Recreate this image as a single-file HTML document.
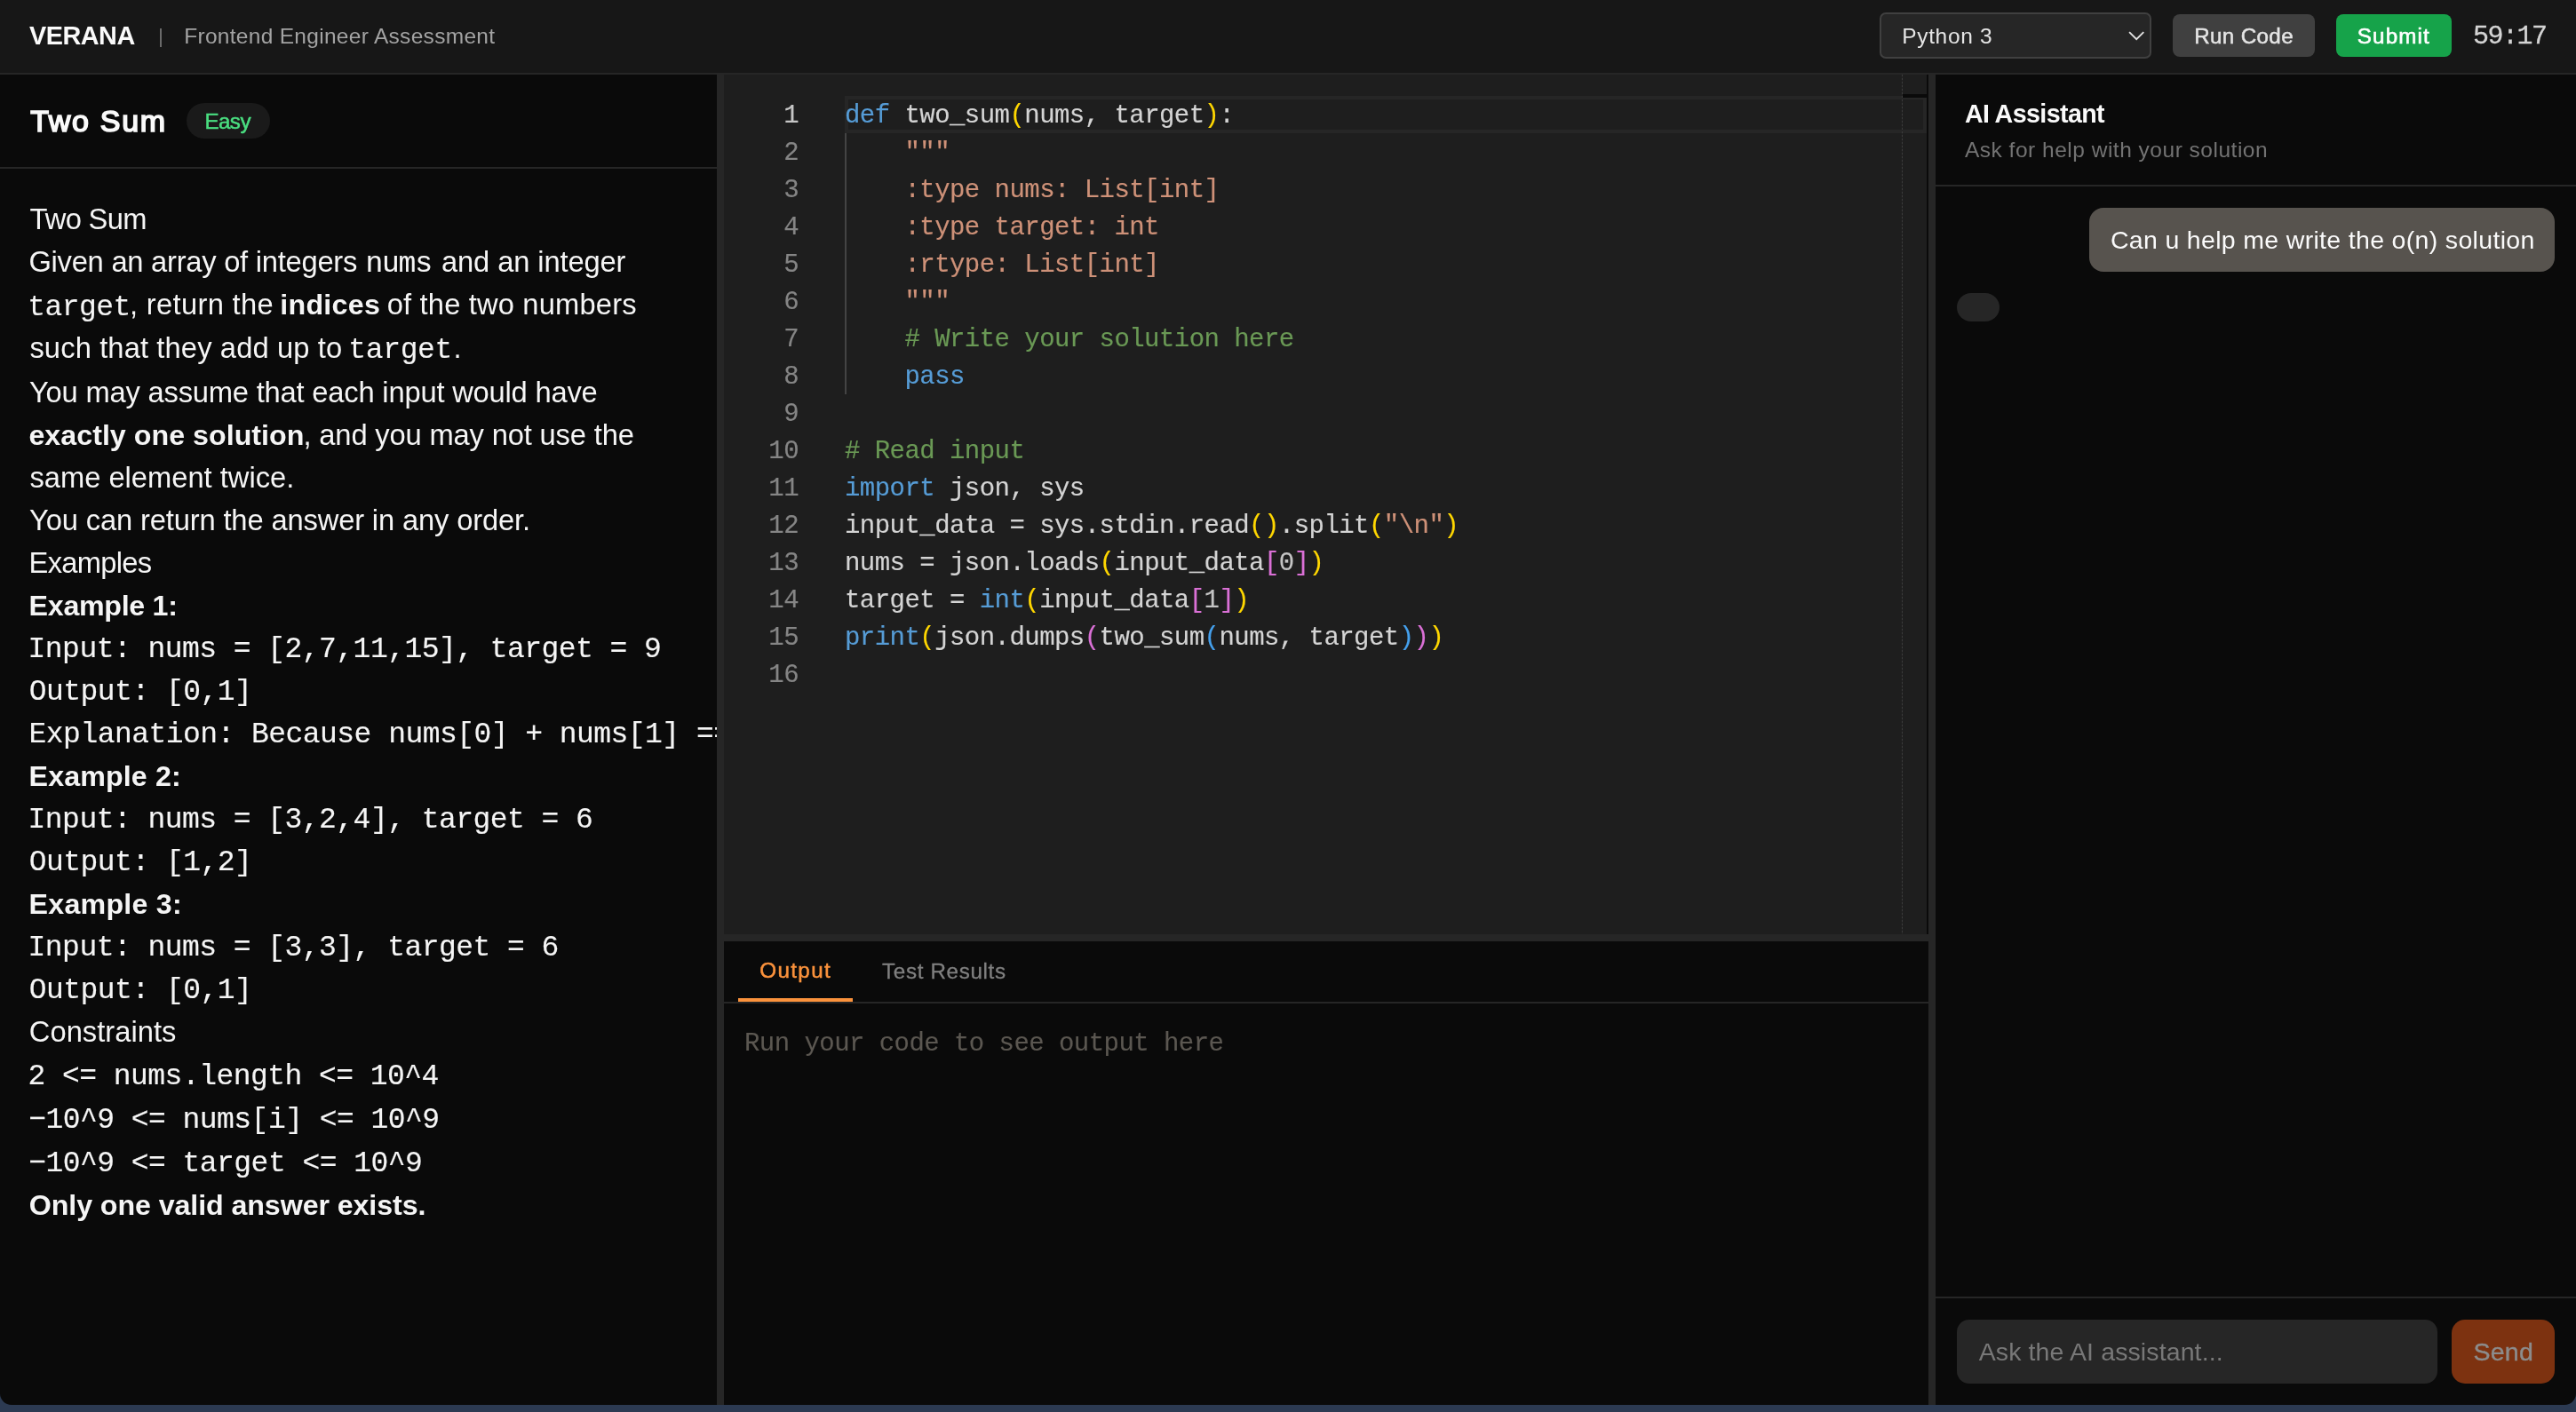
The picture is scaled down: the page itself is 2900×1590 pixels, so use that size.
<!DOCTYPE html>
<html lang="en"><head><meta charset="utf-8"><title>Verana - Frontend Engineer Assessment</title>
<style>
html,body{margin:0;padding:0}
body{width:2900px;height:1590px;background:#2c3a52;overflow:hidden;position:relative;font-family:"Liberation Sans",sans-serif}
#win{position:absolute;left:0;top:0;width:2900px;height:1582px;background:#0a0a0a;border-radius:0 0 13px 13px;overflow:hidden}
.t{position:absolute;white-space:pre;margin:0;padding:0}
.b{position:absolute;box-sizing:border-box}
#txt{position:absolute;left:0;top:0;width:2900px;height:1582px;will-change:transform}
#left{position:absolute;left:0;top:0;width:807px;height:1582px;overflow:hidden}
</style></head><body>
<div id="win">
<!-- header -->
<div class="b" style="left:0;top:0;width:2900px;height:82px;background:#171717"></div>
<div class="b" style="left:0;top:82px;width:2900px;height:2px;background:#262626"></div>
<div class="b" style="left:180px;top:32px;width:2px;height:21px;background:#6a6a6a"></div>
<div class="b" style="left:2116px;top:14px;width:306px;height:52px;background:#262626;border:2px solid #404040;border-radius:7px"></div>
<svg class="b" style="left:2392px;top:30px" width="28" height="22" viewBox="0 0 28 22"><path d="M5.1 6.1 L13.2 14.2 L21.3 6.1" fill="none" stroke="#e2e2e2" stroke-width="1.9" stroke-linecap="butt" stroke-linejoin="miter"/></svg>
<div class="b" style="left:2446px;top:16px;width:160px;height:48px;background:#404040;border-radius:8px"></div>
<div class="b" style="left:2630px;top:16px;width:130px;height:48px;background:#16a34a;border-radius:8px"></div>

<!-- left panel -->
<div class="b" style="left:210px;top:116px;width:94px;height:40px;background:#1a1a1a;border-radius:20px"></div>
<div class="b" style="left:0;top:188px;width:807px;height:2px;background:#262626"></div>

<!-- dividers -->
<div class="b" style="left:807px;top:84px;width:8px;height:1498px;background:#262626"></div>
<div class="b" style="left:2171px;top:84px;width:8px;height:1498px;background:#262626"></div>
<div class="b" style="left:815px;top:1052px;width:1356px;height:8px;background:#262626"></div>

<!-- editor -->
<div class="b" style="left:815px;top:84px;width:1354px;height:968px;background:#1e1e1e"></div>
<div class="b" style="left:951px;top:108px;width:1218px;height:42px;border:4px solid #262626"></div>
<div class="b" style="left:951px;top:150px;width:2px;height:294px;background:#444444"></div>
<div class="b" style="left:2141px;top:84px;width:1px;height:968px;background:repeating-linear-gradient(180deg,#3c3c3c 0,#3c3c3c 2px,#262626 2px,#262626 4px)"></div>
<div class="b" style="left:2142px;top:106px;width:27px;height:4px;background:#0a0a0a"></div>

<!-- output panel -->
<div class="b" style="left:815px;top:1128px;width:1356px;height:2px;background:#262626"></div>
<div class="b" style="left:831px;top:1124px;width:129px;height:4px;background:#fb923c"></div>

<!-- right panel -->
<div class="b" style="left:2179px;top:208px;width:721px;height:2px;background:#262626"></div>
<div class="b" style="left:2352px;top:234px;width:524px;height:72px;background:#57534e;border-radius:16px"></div>
<div class="b" style="left:2203px;top:330px;width:48px;height:32px;background:#262626;border-radius:16px"></div>
<div class="b" style="left:2179px;top:1460px;width:721px;height:2px;background:#262626"></div>
<div class="b" style="left:2203px;top:1486px;width:541px;height:72px;background:#262626;border-radius:14px"></div>
<div class="b" style="left:2760px;top:1486px;width:116px;height:72px;background:#7d3210;border-radius:15px"></div>

</div>
<div id="txt">
<div id="left">
<div class="t" style="left:33.40px;top:228.00px;font:400 32.7px/37px 'Liberation Sans', sans-serif;color:#f5f5f5;letter-spacing:-0.702px;">Two Sum</div>
<div class="t" style="left:32.40px;top:275.80px;font:400 32.7px/37px 'Liberation Sans', sans-serif;color:#f5f5f5;letter-spacing:-0.246px;">Given an array of integers</div>
<div class="t" style="left:411.40px;top:278.80px;font:400 33px/37px 'Liberation Mono', monospace;color:#f5f5f5;letter-spacing:-1.203px;-webkit-text-stroke-width:0.1px;">nums</div>
<div class="t" style="left:497.00px;top:275.80px;font:400 32.7px/37px 'Liberation Sans', sans-serif;color:#f5f5f5;letter-spacing:-0.117px;">and an integer</div>
<div class="t" style="left:31.30px;top:327.60px;font:400 33px/37px 'Liberation Mono', monospace;color:#f5f5f5;letter-spacing:-0.583px;-webkit-text-stroke-width:0.1px;">target</div>
<div class="t" style="left:146.00px;top:324.40px;font:400 32.7px/37px 'Liberation Sans', sans-serif;color:#f5f5f5;letter-spacing:0.328px;">, return the</div>
<div class="t" style="left:315.20px;top:325.40px;font:700 32.2px/36px 'Liberation Sans', sans-serif;color:#f5f5f5;letter-spacing:0.298px;">indices</div>
<div class="t" style="left:435.70px;top:324.40px;font:400 32.7px/37px 'Liberation Sans', sans-serif;color:#f5f5f5;letter-spacing:0.168px;">of the two numbers</div>
<div class="t" style="left:33.40px;top:373.20px;font:400 32.7px/37px 'Liberation Sans', sans-serif;color:#f5f5f5;letter-spacing:0.124px;">such that they add up to</div>
<div class="t" style="left:392.20px;top:376.20px;font:400 33px/37px 'Liberation Mono', monospace;color:#f5f5f5;letter-spacing:-0.323px;-webkit-text-stroke-width:0.1px;">target</div>
<div class="t" style="left:510.50px;top:373.20px;font:400 32.7px/37px 'Liberation Sans', sans-serif;color:#f5f5f5;letter-spacing:0.000px;">.</div>
<div class="t" style="left:33.00px;top:422.50px;font:400 32.7px/37px 'Liberation Sans', sans-serif;color:#f5f5f5;letter-spacing:-0.193px;">You may assume that each input would have</div>
<div class="t" style="left:32.40px;top:471.60px;font:700 32.2px/36px 'Liberation Sans', sans-serif;color:#f5f5f5;letter-spacing:0.033px;">exactly one solution</div>
<div class="t" style="left:341.50px;top:470.60px;font:400 32.7px/37px 'Liberation Sans', sans-serif;color:#f5f5f5;letter-spacing:-0.157px;">, and you may not use the</div>
<div class="t" style="left:33.40px;top:518.60px;font:400 32.7px/37px 'Liberation Sans', sans-serif;color:#f5f5f5;letter-spacing:-0.003px;">same element twice.</div>
<div class="t" style="left:33.00px;top:566.70px;font:400 32.7px/37px 'Liberation Sans', sans-serif;color:#f5f5f5;letter-spacing:-0.139px;">You can return the answer in any order.</div>
<div class="t" style="left:32.60px;top:614.50px;font:400 32.7px/37px 'Liberation Sans', sans-serif;color:#f5f5f5;letter-spacing:-0.711px;">Examples</div>
<div class="t" style="left:32.60px;top:663.50px;font:700 32.2px/36px 'Liberation Sans', sans-serif;color:#f5f5f5;letter-spacing:-0.293px;">Example 1:</div>
<div class="t" style="left:31.60px;top:712.70px;font:400 33px/37px 'Liberation Mono', monospace;color:#f5f5f5;letter-spacing:-0.539px;-webkit-text-stroke-width:0.15px;">Input: nums = [2,7,11,15], target = 9</div>
<div class="t" style="left:32.80px;top:760.70px;font:400 33px/37px 'Liberation Mono', monospace;color:#f5f5f5;letter-spacing:-0.539px;-webkit-text-stroke-width:0.15px;">Output: [0,1]</div>
<div class="t" style="left:32.60px;top:808.70px;font:400 33px/37px 'Liberation Mono', monospace;color:#f5f5f5;letter-spacing:-0.539px;-webkit-text-stroke-width:0.15px;">Explanation: Because nums[0] + nums[1] == 9, we return [0, 1].</div>
<div class="t" style="left:32.60px;top:855.60px;font:700 32.2px/36px 'Liberation Sans', sans-serif;color:#f5f5f5;letter-spacing:0.129px;">Example 2:</div>
<div class="t" style="left:31.60px;top:904.70px;font:400 33px/37px 'Liberation Mono', monospace;color:#f5f5f5;letter-spacing:-0.539px;-webkit-text-stroke-width:0.15px;">Input: nums = [3,2,4], target = 6</div>
<div class="t" style="left:32.80px;top:952.70px;font:400 33px/37px 'Liberation Mono', monospace;color:#f5f5f5;letter-spacing:-0.539px;-webkit-text-stroke-width:0.15px;">Output: [1,2]</div>
<div class="t" style="left:32.60px;top:999.50px;font:700 32.2px/36px 'Liberation Sans', sans-serif;color:#f5f5f5;letter-spacing:0.229px;">Example 3:</div>
<div class="t" style="left:31.60px;top:1048.70px;font:400 33px/37px 'Liberation Mono', monospace;color:#f5f5f5;letter-spacing:-0.539px;-webkit-text-stroke-width:0.15px;">Input: nums = [3,3], target = 6</div>
<div class="t" style="left:32.80px;top:1096.50px;font:400 33px/37px 'Liberation Mono', monospace;color:#f5f5f5;letter-spacing:-0.539px;-webkit-text-stroke-width:0.15px;">Output: [0,1]</div>
<div class="t" style="left:32.80px;top:1142.70px;font:400 32.7px/37px 'Liberation Sans', sans-serif;color:#f5f5f5;letter-spacing:0.022px;">Constraints</div>
<div class="t" style="left:31.50px;top:1193.80px;font:400 33px/37px 'Liberation Mono', monospace;color:#f5f5f5;letter-spacing:-0.539px;-webkit-text-stroke-width:0.15px;">2 &lt;= nums.length &lt;= 10^4</div>
<div class="t" style="left:32.20px;top:1242.90px;font:400 33px/37px 'Liberation Mono', monospace;color:#f5f5f5;letter-spacing:-0.539px;-webkit-text-stroke-width:0.15px;">−10^9 &lt;= nums[i] &lt;= 10^9</div>
<div class="t" style="left:32.20px;top:1291.80px;font:400 33px/37px 'Liberation Mono', monospace;color:#f5f5f5;letter-spacing:-0.539px;-webkit-text-stroke-width:0.15px;">−10^9 &lt;= target &lt;= 10^9</div>
<div class="t" style="left:32.80px;top:1338.70px;font:700 32.2px/36px 'Liberation Sans', sans-serif;color:#f5f5f5;letter-spacing:-0.085px;">Only one valid answer exists.</div>
</div>
<div class="t" style="left:33.00px;top:23.90px;font:700 28.8px/32px 'Liberation Sans', sans-serif;color:#fafafa;letter-spacing:-0.481px;">VERANA</div>
<div class="t" style="left:207.20px;top:27.20px;font:400 24.5px/27px 'Liberation Sans', sans-serif;color:#a3a3a3;letter-spacing:0.297px;">Frontend Engineer Assessment</div>
<div class="t" style="left:2141.20px;top:27.40px;font:400 24.5px/27px 'Liberation Sans', sans-serif;color:#e5e5e5;letter-spacing:0.674px;">Python 3</div>
<div class="t" style="left:2470.20px;top:26.90px;font:400 24.2px/27px 'Liberation Sans', sans-serif;color:#e5e5e5;letter-spacing:0.362px;-webkit-text-stroke:0.5px #e5e5e5;">Run Code</div>
<div class="t" style="left:2653.80px;top:26.90px;font:400 24.2px/27px 'Liberation Sans', sans-serif;color:#ffffff;letter-spacing:1.128px;-webkit-text-stroke:0.6px #fff;">Submit</div>
<div class="t" style="left:2784.00px;top:23.80px;font:400 30px/34px 'Liberation Mono', monospace;color:#d4d4d4;letter-spacing:-1.503px;-webkit-text-stroke-width:0.3px;">59:17</div>
<div class="t" style="left:34.20px;top:116.90px;font:400 34px/38px 'Liberation Sans', sans-serif;color:#fafafa;letter-spacing:1.702px;-webkit-text-stroke:1.7px #fafafa;">Two Sum</div>
<div class="t" style="left:230.40px;top:122.90px;font:400 24.2px/27px 'Liberation Sans', sans-serif;color:#4ade80;letter-spacing:-0.560px;-webkit-text-stroke:0.5px #4ade80;">Easy</div>
<div class="t" style="left:882.14px;top:114.00px;font:400 29px/33px 'Liberation Mono', monospace;color:#c6c6c6;letter-spacing:-0.547px;-webkit-text-stroke-width:0.15px;">1</div>
<div class="t" style="left:951.00px;top:114.00px;font:400 29px/33px 'Liberation Mono', monospace;color:#d4d4d4;letter-spacing:-0.547px;-webkit-text-stroke-width:0.15px;"><span style="color:#569cd6">def</span><span style="color:#d4d4d4"> two_sum</span><span style="color:#ffd700">(</span><span style="color:#d4d4d4">nums, target</span><span style="color:#ffd700">)</span><span style="color:#d4d4d4">:</span></div>
<div class="t" style="left:882.14px;top:156.00px;font:400 29px/33px 'Liberation Mono', monospace;color:#858585;letter-spacing:-0.547px;-webkit-text-stroke-width:0.15px;">2</div>
<div class="t" style="left:951.00px;top:156.00px;font:400 29px/33px 'Liberation Mono', monospace;color:#d4d4d4;letter-spacing:-0.547px;-webkit-text-stroke-width:0.15px;"><span style="color:#ce9178">    &quot;&quot;&quot;</span></div>
<div class="t" style="left:882.14px;top:198.00px;font:400 29px/33px 'Liberation Mono', monospace;color:#858585;letter-spacing:-0.547px;-webkit-text-stroke-width:0.15px;">3</div>
<div class="t" style="left:951.00px;top:198.00px;font:400 29px/33px 'Liberation Mono', monospace;color:#d4d4d4;letter-spacing:-0.547px;-webkit-text-stroke-width:0.15px;"><span style="color:#ce9178">    :type nums: List[int]</span></div>
<div class="t" style="left:882.14px;top:240.00px;font:400 29px/33px 'Liberation Mono', monospace;color:#858585;letter-spacing:-0.547px;-webkit-text-stroke-width:0.15px;">4</div>
<div class="t" style="left:951.00px;top:240.00px;font:400 29px/33px 'Liberation Mono', monospace;color:#d4d4d4;letter-spacing:-0.547px;-webkit-text-stroke-width:0.15px;"><span style="color:#ce9178">    :type target: int</span></div>
<div class="t" style="left:882.14px;top:282.00px;font:400 29px/33px 'Liberation Mono', monospace;color:#858585;letter-spacing:-0.547px;-webkit-text-stroke-width:0.15px;">5</div>
<div class="t" style="left:951.00px;top:282.00px;font:400 29px/33px 'Liberation Mono', monospace;color:#d4d4d4;letter-spacing:-0.547px;-webkit-text-stroke-width:0.15px;"><span style="color:#ce9178">    :rtype: List[int]</span></div>
<div class="t" style="left:882.14px;top:324.00px;font:400 29px/33px 'Liberation Mono', monospace;color:#858585;letter-spacing:-0.547px;-webkit-text-stroke-width:0.15px;">6</div>
<div class="t" style="left:951.00px;top:324.00px;font:400 29px/33px 'Liberation Mono', monospace;color:#d4d4d4;letter-spacing:-0.547px;-webkit-text-stroke-width:0.15px;"><span style="color:#ce9178">    &quot;&quot;&quot;</span></div>
<div class="t" style="left:882.14px;top:366.00px;font:400 29px/33px 'Liberation Mono', monospace;color:#858585;letter-spacing:-0.547px;-webkit-text-stroke-width:0.15px;">7</div>
<div class="t" style="left:951.00px;top:366.00px;font:400 29px/33px 'Liberation Mono', monospace;color:#d4d4d4;letter-spacing:-0.547px;-webkit-text-stroke-width:0.15px;"><span style="color:#6a9955">    # Write your solution here</span></div>
<div class="t" style="left:882.14px;top:408.00px;font:400 29px/33px 'Liberation Mono', monospace;color:#858585;letter-spacing:-0.547px;-webkit-text-stroke-width:0.15px;">8</div>
<div class="t" style="left:951.00px;top:408.00px;font:400 29px/33px 'Liberation Mono', monospace;color:#d4d4d4;letter-spacing:-0.547px;-webkit-text-stroke-width:0.15px;"><span style="color:#569cd6">    pass</span></div>
<div class="t" style="left:882.14px;top:450.00px;font:400 29px/33px 'Liberation Mono', monospace;color:#858585;letter-spacing:-0.547px;-webkit-text-stroke-width:0.15px;">9</div>
<div class="t" style="left:865.29px;top:492.00px;font:400 29px/33px 'Liberation Mono', monospace;color:#858585;letter-spacing:-0.547px;-webkit-text-stroke-width:0.15px;">10</div>
<div class="t" style="left:951.00px;top:492.00px;font:400 29px/33px 'Liberation Mono', monospace;color:#d4d4d4;letter-spacing:-0.547px;-webkit-text-stroke-width:0.15px;"><span style="color:#6a9955"># Read input</span></div>
<div class="t" style="left:865.29px;top:534.00px;font:400 29px/33px 'Liberation Mono', monospace;color:#858585;letter-spacing:-0.547px;-webkit-text-stroke-width:0.15px;">11</div>
<div class="t" style="left:951.00px;top:534.00px;font:400 29px/33px 'Liberation Mono', monospace;color:#d4d4d4;letter-spacing:-0.547px;-webkit-text-stroke-width:0.15px;"><span style="color:#569cd6">import</span><span style="color:#d4d4d4"> json, sys</span></div>
<div class="t" style="left:865.29px;top:576.00px;font:400 29px/33px 'Liberation Mono', monospace;color:#858585;letter-spacing:-0.547px;-webkit-text-stroke-width:0.15px;">12</div>
<div class="t" style="left:951.00px;top:576.00px;font:400 29px/33px 'Liberation Mono', monospace;color:#d4d4d4;letter-spacing:-0.547px;-webkit-text-stroke-width:0.15px;"><span style="color:#d4d4d4">input_data = sys.stdin.read</span><span style="color:#ffd700">()</span><span style="color:#d4d4d4">.split</span><span style="color:#ffd700">(</span><span style="color:#ce9178">&quot;\n&quot;</span><span style="color:#ffd700">)</span></div>
<div class="t" style="left:865.29px;top:618.00px;font:400 29px/33px 'Liberation Mono', monospace;color:#858585;letter-spacing:-0.547px;-webkit-text-stroke-width:0.15px;">13</div>
<div class="t" style="left:951.00px;top:618.00px;font:400 29px/33px 'Liberation Mono', monospace;color:#d4d4d4;letter-spacing:-0.547px;-webkit-text-stroke-width:0.15px;"><span style="color:#d4d4d4">nums = json.loads</span><span style="color:#ffd700">(</span><span style="color:#d4d4d4">input_data</span><span style="color:#da70d6">[</span><span style="color:#c4c4c4">0</span><span style="color:#da70d6">]</span><span style="color:#ffd700">)</span></div>
<div class="t" style="left:865.29px;top:660.00px;font:400 29px/33px 'Liberation Mono', monospace;color:#858585;letter-spacing:-0.547px;-webkit-text-stroke-width:0.15px;">14</div>
<div class="t" style="left:951.00px;top:660.00px;font:400 29px/33px 'Liberation Mono', monospace;color:#d4d4d4;letter-spacing:-0.547px;-webkit-text-stroke-width:0.15px;"><span style="color:#d4d4d4">target = </span><span style="color:#569cd6">int</span><span style="color:#ffd700">(</span><span style="color:#d4d4d4">input_data</span><span style="color:#da70d6">[</span><span style="color:#c4c4c4">1</span><span style="color:#da70d6">]</span><span style="color:#ffd700">)</span></div>
<div class="t" style="left:865.29px;top:702.00px;font:400 29px/33px 'Liberation Mono', monospace;color:#858585;letter-spacing:-0.547px;-webkit-text-stroke-width:0.15px;">15</div>
<div class="t" style="left:951.00px;top:702.00px;font:400 29px/33px 'Liberation Mono', monospace;color:#d4d4d4;letter-spacing:-0.547px;-webkit-text-stroke-width:0.15px;"><span style="color:#569cd6">print</span><span style="color:#ffd700">(</span><span style="color:#d4d4d4">json.dumps</span><span style="color:#da70d6">(</span><span style="color:#d4d4d4">two_sum</span><span style="color:#45a0ec">(</span><span style="color:#d4d4d4">nums, target</span><span style="color:#45a0ec">)</span><span style="color:#da70d6">)</span><span style="color:#ffd700">)</span></div>
<div class="t" style="left:865.29px;top:744.00px;font:400 29px/33px 'Liberation Mono', monospace;color:#858585;letter-spacing:-0.547px;-webkit-text-stroke-width:0.15px;">16</div>
<div class="t" style="left:855.30px;top:1079.00px;font:400 24.2px/27px 'Liberation Sans', sans-serif;color:#fb923c;letter-spacing:1.362px;-webkit-text-stroke:0.5px #fb923c;">Output</div>
<div class="t" style="left:993.00px;top:1080.40px;font:400 24.2px/27px 'Liberation Sans', sans-serif;color:#808080;letter-spacing:0.669px;-webkit-text-stroke:0.3px #808080;">Test Results</div>
<div class="t" style="left:838.00px;top:1159.00px;font:400 29px/33px 'Liberation Mono', monospace;color:#5b5751;letter-spacing:-0.547px;-webkit-text-stroke-width:0.15px;">Run your code to see output here</div>
<div class="t" style="left:2211.90px;top:111.90px;font:700 28.6px/32px 'Liberation Sans', sans-serif;color:#fafafa;letter-spacing:-0.585px;">AI Assistant</div>
<div class="t" style="left:2211.90px;top:155.00px;font:400 24.5px/27px 'Liberation Sans', sans-serif;color:#737373;letter-spacing:0.509px;">Ask for help with your solution</div>
<div class="t" style="left:2375.90px;top:254.10px;font:400 28.5px/32px 'Liberation Sans', sans-serif;color:#fafafa;letter-spacing:0.325px;">Can u help me write the o(n) solution</div>
<div class="t" style="left:2227.70px;top:1506.10px;font:400 28.5px/32px 'Liberation Sans', sans-serif;color:#787878;letter-spacing:0.113px;">Ask the AI assistant...</div>
<div class="t" style="left:2784.40px;top:1506.10px;font:400 28.5px/32px 'Liberation Sans', sans-serif;color:#8c8c8c;letter-spacing:0.297px;-webkit-text-stroke:0.4px #8c8c8c;">Send</div>
</div>
</body></html>
